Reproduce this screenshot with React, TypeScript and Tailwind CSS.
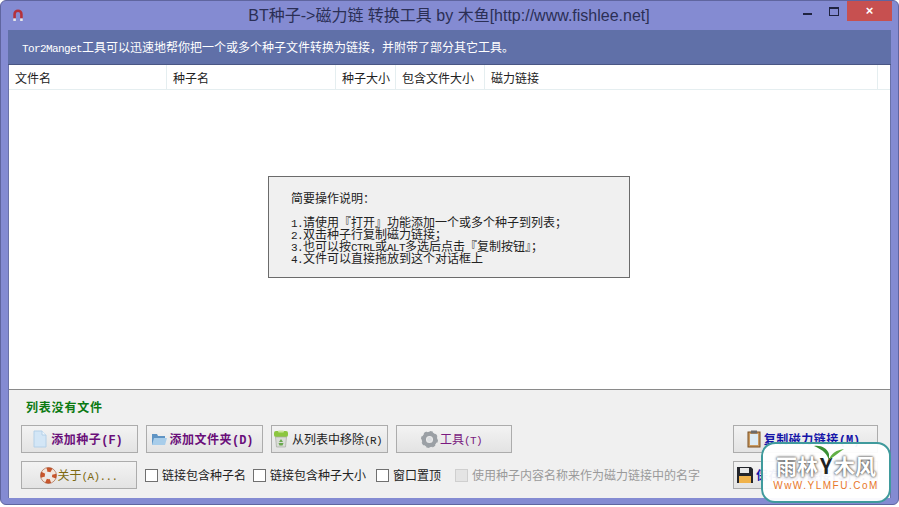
import React from 'react';

const CJK = "font-['Noto_Sans_CJK_SC','Noto_Sans',sans-serif]";

const MagnetIcon = () => (
  <svg width="12" height="14" viewBox="0 0 14 16">
    <path d="M1.5 12V7a5.5 5.5 0 0 1 11 0v5H9.5V7a2.5 2.5 0 0 0-5 0v5z" fill="#b5313a" />
    <rect x="1.5" y="12" width="3" height="3" fill="#e6e6ea" />
    <rect x="9.5" y="12" width="3" height="3" fill="#e6e6ea" />
  </svg>
);

const FileIcon = () => (
  <svg width="16" height="18" viewBox="0 0 16 18">
    <path d="M2 1h8l4 4v12H2z" fill="#d3e6f6" stroke="#b4d0e8" />
    <path d="M10 1v4h4" fill="#eef6fc" stroke="#b4d0e8" />
  </svg>
);

const FolderIcon = () => (
  <svg width="16" height="14" viewBox="0 0 16 14">
    <path d="M1 2h5l1 2h7v9H1z" fill="#5f94c4" />
    <path d="M3 6h13l-2 7H1z" fill="#a8cdea" />
  </svg>
);

const BinIcon = () => (
  <svg width="16" height="18" viewBox="0 0 16 18">
    <rect x="1" y="1" width="14" height="6" rx="2" fill="#8cc63f" />
    <rect x="5" y="0.5" width="6" height="2" rx="1" fill="#c9e59a" />
    <path d="M2.5 7h11l-1 10h-9z" fill="#d9dcd6" stroke="#a6aaa0" strokeWidth="0.7" />
    <path d="M8 9l2 3H6zM5.5 13h5l-1 2.5h-3z" fill="#6aa84f" />
  </svg>
);

const GearIcon = () => (
  <svg width="17" height="17" viewBox="0 0 24 24">
    <circle cx="12" cy="12" r="8" fill="none" stroke="#9ba0a5" strokeWidth="6" />
    <circle cx="12" cy="12" r="10" fill="none" stroke="#9ba0a5" strokeWidth="4" strokeDasharray="4 3.85" />
    <circle cx="12" cy="12" r="3.5" fill="#dcdfe2" />
  </svg>
);

const BuoyIcon = () => (
  <svg width="17" height="17" viewBox="0 0 18 18">
    <circle cx="9" cy="9" r="6.2" fill="none" stroke="#f2e6dc" strokeWidth="4.6" />
    <circle cx="9" cy="9" r="6.2" fill="none" stroke="#c8562c" strokeWidth="4.6" strokeDasharray="4.9 4.85" strokeDashoffset="2.4" />
    <circle cx="9" cy="9" r="8.4" fill="none" stroke="#9a4a2a" strokeWidth="0.6" />
  </svg>
);

const ClipboardIcon = () => (
  <svg width="14" height="18" viewBox="0 0 14 18">
    <rect x="1" y="2" width="12" height="15" fill="#c89a62" stroke="#7b4f20" />
    <rect x="3" y="4" width="8" height="11" fill="#dcebf5" />
    <rect x="4" y="0.5" width="6" height="3" fill="#6b6b6b" />
  </svg>
);

const FloppyIcon = () => (
  <svg width="16" height="16" viewBox="0 0 16 16">
    <path d="M0 0h14l2 2v14H0z" fill="#23252b" />
    <rect x="3" y="1" width="9" height="5" fill="#e8e8e8" />
    <rect x="2" y="9" width="12" height="7" fill="#f0b24a" />
  </svg>
);

// latin runs are half a CJK cell wide in the original bitmap font
const Lat = ({ children }: { children: React.ReactNode }) => (
  <span className="font-['Liberation_Mono',monospace] text-[11px] tracking-[-0.6px] leading-[0]">{children}</span>
);

const BoldLat = ({ children }: { children: React.ReactNode }) => (
  <span className="font-['Liberation_Mono',monospace] text-[12px] tracking-normal leading-[0]">{children}</span>
);

const TOOL_BUTTON =
  'flex items-center justify-center h-[28px] border border-[#acacac] bg-gradient-to-b from-[#f3f3f3] to-[#e3e3e3] text-[12px] whitespace-nowrap';

const Check = ({ label, disabled, className }: { label: string; disabled?: boolean; className?: string }) => (
  <label className={`flex items-center gap-[4px] text-[12px] ${disabled ? 'text-[#9a9a9a]' : 'text-[#222]'} ${className ?? ''}`}>
    <span className={`w-[13px] h-[13px] border ${disabled ? 'border-[#cfcfcf] bg-[#e4e4e4]' : 'border-[#707070] bg-white'}`} />
    {label}
  </label>
);

const COLUMNS = [
  { name: '文件名', w: 'w-[158px]' },
  { name: '种子名', w: 'w-[169px]' },
  { name: '种子大小', w: 'w-[60px]' },
  { name: '包含文件大小', w: 'w-[89px]' },
  { name: '磁力链接', w: 'w-[393px]' },
];

export default function App() {
  return (
    <div className={`w-[899px] h-[507px] bg-white overflow-hidden relative ${CJK}`}>
      <div className="w-full h-[505px] bg-[#848bd2] rounded-[6px] border border-[#5f659f] flex flex-col">
        {/* Title bar */}
        <div className="h-[29px] shrink-0 flex items-center">
          <div className="ml-[11px] mb-[1px] flex"><MagnetIcon /></div>
          <div className="flex-1 text-center text-[16px] text-[#2b2f55] font-['Liberation_Sans','Noto_Sans_CJK_SC',sans-serif] pl-[71px]">
            BT种子-&gt;磁力链 转换工具 by 木鱼[http://www.fishlee.net]
          </div>
          <div className="flex items-start self-start mr-[6px]">
            <div className="w-[9px] h-[2px] bg-[#1f2340] mt-[12px] mr-[17px]" />
            <div className="w-[10px] h-[9px] border border-[#1f2340] border-t-2 mt-[6px] mr-[8px]" />
            <div className="w-[45px] h-[20px] bg-[#c75050] flex items-center justify-center text-white text-[13px] font-bold font-['Liberation_Sans',sans-serif]">×</div>
          </div>
        </div>

        {/* Content */}
        <div className="mx-[7px] flex-1 flex flex-col min-h-0">
          <div className="h-[35px] shrink-0 bg-[#6070a8] border-b border-[#4a5684] flex items-center pl-[14px] text-[12px] text-white">
            <div><Lat>Tor2Manget</Lat>工具可以迅速地帮你把一个或多个种子文件转换为链接，并附带了部分其它工具。</div>
          </div>
          <div className="flex-1 flex flex-col min-h-0 border-x border-[#6a72a8]">
            <div className="h-[25px] shrink-0 bg-white border-b border-[#e5eef0] flex">
              {COLUMNS.map((col) => (
                <div key={col.name} className={`${col.w} shrink-0 border-r border-[#e5eef0] pl-[6px] pt-[2px] flex items-center text-[12px] text-[#222]`}>
                  {col.name}
                </div>
              ))}
            </div>
            <div className="h-[300px] shrink-0 bg-white flex items-center justify-center pb-[25px] pr-[1px] border-b border-[#8a8a8a]">
              <div className="w-[362px] h-[102px] bg-[#f0f0f0] border border-[#6b6b6b] pl-[22px] pt-[15px] text-[12px] text-[#222] leading-[12px]">
                <div className="mb-[12px]">简要操作说明：</div>
                <div><Lat>1.</Lat>请使用『打开』功能添加一个或多个种子到列表；</div>
                <div><Lat>2.</Lat>双击种子行复制磁力链接；</div>
                <div><Lat>3.</Lat>也可以按<Lat>CTRL</Lat>或<Lat>ALT</Lat>多选后点击『复制按钮』；</div>
                <div><Lat>4.</Lat>文件可以直接拖放到这个对话框上</div>
              </div>
            </div>

            {/* Bottom panel */}
            <div className="flex-1 bg-[#f0f0f0] px-[12px] pt-[8px]">
              <div className="text-[12px] tracking-[0.8px] font-bold text-[#0b7a12] pl-[5px] h-[18px] leading-[18px]">列表没有文件</div>
              <div className="flex mt-[9px]">
                <div className="flex gap-[8px]">
                  <button className={`${TOOL_BUTTON} gap-[3px] w-[117px] pr-[4px] font-bold tracking-[0.5px] text-[#6a0f7a]`}><FileIcon /><span>添加种子<BoldLat>(F)</BoldLat></span></button>
                  <button className={`${TOOL_BUTTON} gap-[2px] w-[117px] pr-[4px] font-bold tracking-[0.5px] text-[#6a0f7a]`}><FolderIcon /><span>添加文件夹<BoldLat>(D)</BoldLat></span></button>
                  <button className={`${TOOL_BUTTON} gap-[3px] w-[117px] pr-[4px] text-[#222]`}><BinIcon /><span>从列表中移除<Lat>(R)</Lat></span></button>
                  <button className={`${TOOL_BUTTON} gap-[2px] w-[116px] pr-[5px] text-[#7a1a80]`}><GearIcon /><span>工具<Lat>(T)</Lat></span></button>
                </div>
                <button className={`${TOOL_BUTTON} gap-[3px] w-[145px] pr-[4px] ml-auto font-bold tracking-[0.5px] text-[#1414a8]`}><ClipboardIcon /><span>复制磁力链接<BoldLat>(M)</BoldLat></span></button>
              </div>
              <div className="flex items-center mt-[8px]">
                <button className={`${TOOL_BUTTON} gap-0 w-[116px] text-[#7d6a10]`}><BuoyIcon /><span>关于<Lat>(A)...</Lat></span></button>
                <Check label="链接包含种子名" className="ml-[8px]" />
                <Check label="链接包含种子大小" className="ml-[7px]" />
                <Check label="窗口置顶" className="ml-[10px]" />
                <Check label="使用种子内容名称来作为磁力链接中的名字" disabled className="ml-[14px]" />
                <button className={`${TOOL_BUTTON} gap-[3px] w-[145px] ml-auto font-bold tracking-[0.5px] text-[#1414a8]`}><FloppyIcon /><span>保存磁力链接<BoldLat>(S)...</BoldLat></span></button>
              </div>
            </div>
          </div>
        </div>
        <div className="h-[6px] shrink-0" />
      </div>

      {/* Site watermark in the corner */}
      <div className="absolute left-[761px] top-[442px] w-[130px] h-[61px] bg-white/95 rounded-[14px] border-2 border-[#3f9a9c] flex flex-col items-center">
        <svg className="absolute left-[50px] top-[1px]" width="32" height="16" viewBox="0 0 32 16">
          <path d="M16 15C13 6 7 4 1 1c7-1 13 2 15 8z" fill="#3a8f34" />
          <path d="M16 15c2-7 8-10 15-11-5 3-9 7-15 11z" fill="#62b046" />
        </svg>
        <div className="mt-[8px] flex items-center gap-[2px] text-[21px] leading-[26px] font-bold text-white [text-shadow:0_0_3px_#555,0_0_2px_#555]">
          <span>雨林</span><span className="text-[#222] [text-shadow:none]">Y</span><span>木风</span>
        </div>
        <div className="text-[10px] leading-[14px] tracking-[1.5px] mt-[1px] text-[#e8772a] font-['Liberation_Sans',sans-serif]">WwW.YLMFU.CoM</div>
      </div>
    </div>
  );
}
